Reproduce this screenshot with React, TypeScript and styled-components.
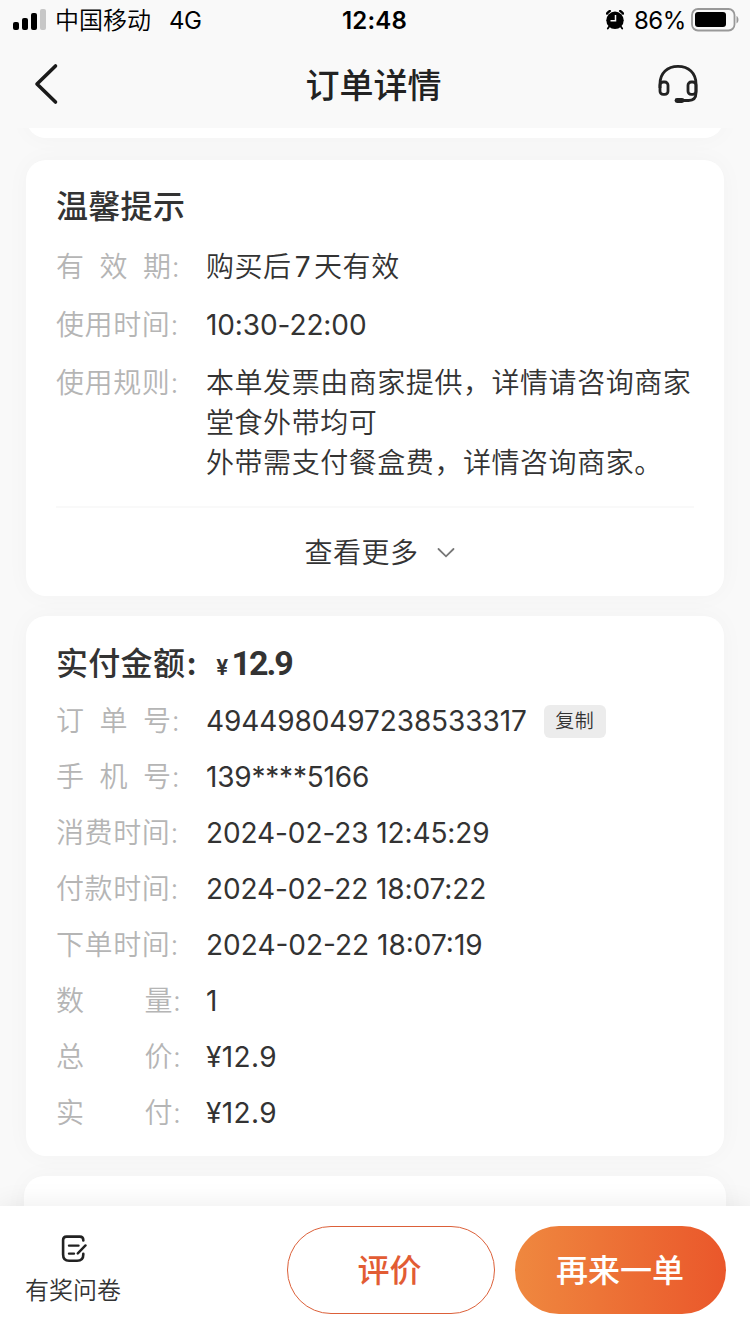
import React from "react";
import styled, { createGlobalStyle } from "styled-components";

const GlobalStyle = createGlobalStyle`
  * { box-sizing: border-box; }
  body {
    margin: 0;
    background: #f9f9f9;
    font-family: Inter, "Noto Sans CJK SC", sans-serif;
    color: #333;
  }
  button { font: inherit; color: inherit; padding: 0; border: 0; background: none; }
`;

const Screen = styled.div`
  width: 750px;
  height: 1334px;
  display: flex;
  flex-direction: column;
  overflow: hidden;
`;

const StatusBar = styled.header`
  height: 40px;
  display: grid;
  grid-template-columns: 1fr auto 1fr;
  align-items: center;
  padding: 0 11px 0 13px;
  background: #f9f9f9;
  color: #000;
  font-size: 24px;
  line-height: 38px;
`;

const StatusGroup = styled.div<{ $end?: boolean }>`
  display: flex;
  align-items: center;
  justify-content: ${(p) => (p.$end ? "flex-end" : "flex-start")};
`;

const Carrier = styled.span`
  margin-left: 9px;
  padding-top: 2px;
  font-weight: 350;
`;

const Network = styled.span`
  margin-left: 18px;
  padding-top: 2px;
  letter-spacing: -0.5px;
`;

const Clock = styled.span`
  padding: 2px 3px 0 0;
  font-weight: 600;
  letter-spacing: 0.2px;
`;

const Percent = styled.span`
  margin: 0 5px 0 10px;
  padding-top: 2px;
  letter-spacing: -0.4px;
`;

const NavBar = styled.nav`
  height: 88px;
  flex: none;
  display: grid;
  grid-template-columns: 64px 1fr 64px;
  align-items: center;
  padding: 0 40px 0 14px;
  background: #f9f9f9;
`;

const NavTitle = styled.h1`
  margin: 0;
  padding: 3px 0 0 23px;
  text-align: center;
  font-size: 34px;
  line-height: 48px;
  font-weight: 500;
  color: #222;
`;

const IconButton = styled.button`
  display: flex;
  justify-content: center;
`;

const Content = styled.main`
  flex: 1;
  min-height: 0;
  overflow: hidden;
  display: flex;
  flex-direction: column;
  gap: 20px;
  padding: 0 26px;
`;

const Card = styled.section<{ $height: number }>`
  flex: none;
  height: ${(p) => p.$height}px;
  padding: 26px 30px 0;
  border-radius: 20px;
  background: #fff;
  box-shadow: 0 0 24px rgba(0, 0, 0, 0.03);
`;

const PreviousCard = styled(Card)`
  margin-top: -30px;
  margin-bottom: 2px;
`;

const NextCard = styled(Card)`
  margin: 0 -2px;
`;

const CardTitle = styled.h2<{ $gap: number }>`
  display: flex;
  align-items: baseline;
  margin: 0 0 ${(p) => p.$gap}px;
  font-size: 32px;
  line-height: 42px;
  font-weight: 500;
  letter-spacing: 0.3px;
`;

const TitleColon = styled.span`
  margin-left: 1px;
  font-weight: 700;
`;

const Currency = styled.span`
  margin-left: 19px;
  font-size: 21px;
  font-weight: 700;
`;

const Amount = styled.span`
  margin-left: 3px;
  font-family: Roboto, sans-serif;
  font-size: 34px;
  font-weight: 700;
  letter-spacing: -2px;
`;

const Rows = styled.dl<{ $gap: number }>`
  margin: 0;
  display: flex;
  flex-direction: column;
  gap: ${(p) => p.$gap}px;
`;

const Row = styled.div`
  display: grid;
  grid-template-columns: 150px 1fr;
  font-size: 28px;
  line-height: 40px;
`;

const Label = styled.dt`
  color: #b5b5b5;
  white-space: pre;
  font-weight: 350;
  letter-spacing: 0.6px;
  word-spacing: -1px;
`;

const TextValue = styled.dd`
  margin: 0;
  white-space: pre;
  font-weight: 350;
  letter-spacing: 0.55px;
`;

const Digit = styled.span`
  margin: 0 3px;
  font-weight: 400;
`;

const NumberValue = styled.dd<{ $spacing?: number }>`
  display: flex;
  align-items: center;
  margin: 0;
  white-space: pre;
  letter-spacing: ${(p) => p.$spacing ?? -0.1}px;
`;

const CopyButton = styled.button`
  width: 62px;
  height: 33px;
  margin-left: 17px;
  border-radius: 6px;
  background: #ececec;
  font-size: 19px;
  font-weight: 350;
  line-height: 33px;
  letter-spacing: 0.4px;
`;

const MoreButton = styled.button`
  width: 100%;
  height: 91px;
  margin-top: 23px;
  padding-left: 9px;
  border-top: 2px solid #f9f9f9;
  display: flex;
  align-items: center;
  justify-content: center;
  gap: 18px;
  font-size: 28px;
  font-weight: 350;
  line-height: 40px;
  letter-spacing: 0.5px;
`;

const ActionBar = styled.footer`
  position: relative;
  flex: none;
  height: 128px;
  display: flex;
  align-items: flex-start;
  padding: 20px 24px 0;
  background: #fff;
  box-shadow: 0 -2px 24px rgba(0, 0, 0, 0.07);
`;

const Survey = styled.button`
  display: flex;
  flex-direction: column;
  align-items: center;
  gap: 11px;
  margin: 9px auto 0 1px;
  font-size: 24px;
  font-weight: 350;
  line-height: 34px;
`;

const PillButton = styled.button<{ $primary?: boolean }>`
  width: ${(p) => (p.$primary ? 211 : 208)}px;
  height: 88px;
  margin-left: ${(p) => (p.$primary ? 20 : 0)}px;
  padding: 0 ${(p) => (p.$primary ? 1 : 3)}px 4px 0;
  border-radius: 44px;
  border: ${(p) => (p.$primary ? "0" : "1px solid #dc6039")};
  background: ${(p) => (p.$primary ? "linear-gradient(90deg, #ef883f, #ea572b)" : "#fff")};
  color: ${(p) => (p.$primary ? "#fff" : "#e25c34")};
  font-size: 32px;
  font-weight: 500;
`;

const SignalIcon = () => (
  <svg width="33" height="22" viewBox="0 0 33 22">
    <rect x="0" y="13" width="6" height="8" rx="2" />
    <rect x="9" y="9" width="6" height="12" rx="2" />
    <rect x="18" y="4" width="6" height="17" rx="2" />
    <rect x="27" y="0" width="6" height="21" rx="2" fill="#c7c7c7" />
  </svg>
);

const AlarmIcon = () => (
  <svg width="18" height="20" viewBox="0 0 18 20" fill="none" stroke="#000">
    <circle cx="9" cy="10.3" r="8.7" fill="#000" stroke="none" />
    <path d="M1 3.600A14 14 0 0 1 3.800 1M14.200 1a14 14 0 0 1 2.800 2.600" strokeWidth="2.400" strokeLinecap="round" />
    <path d="M3.200 16.600 1.800 18.600M14.800 16.600l1.400 2" strokeWidth="1.800" strokeLinecap="round" />
    <path d="M9.500 5v5.800H4.500" stroke="#f9f9f9" strokeWidth="1.500" />
  </svg>
);

const BatteryIcon = () => (
  <svg width="48" height="24" viewBox="0 0 48 24">
    <rect x="1" y="1" width="42.500" height="21.500" rx="6" fill="none" stroke="#999" strokeWidth="1.800" />
    <rect x="4" y="4" width="31" height="15" rx="3" />
    <path d="M45.500 8c2.600 1.200 2.600 6.400 0 7.400z" fill="#999" />
  </svg>
);

const BackIcon = () => (
  <svg width="26" height="42" viewBox="0 0 26 42">
    <path d="M22.500 3 4 21l18.500 18" fill="none" stroke="#1a1a1a" strokeWidth="3.600" strokeLinecap="round" strokeLinejoin="round" />
  </svg>
);

const HeadsetIcon = () => (
  <svg width="40" height="40" viewBox="0 0 40 40" fill="none" stroke="#222" strokeWidth="2.800">
    <path d="M2 24V20C2 9 9.500 2.400 20 2.400S38 9 38 20V29q0 7.500-7.500 7.500H22" />
    <rect x="2" y="18" width="8" height="12.400" rx="3.200" />
    <rect x="30" y="18" width="8" height="12.400" rx="3.200" />
    <path d="M19 36.500h5" strokeWidth="4.800" strokeLinecap="round" />
  </svg>
);

const ChevronIcon = () => (
  <svg width="18" height="12" viewBox="0 0 18 12">
    <path d="m1.500 2 7.500 7.300L16.500 2" fill="none" stroke="#777" strokeWidth="1.800" strokeLinecap="round" />
  </svg>
);

const SurveyIcon = () => (
  <svg width="28" height="28" viewBox="0 0 28 28" fill="none" stroke="#222" strokeWidth="2.600" strokeLinecap="round">
    <g transform="translate(1.500 0)">
      <path d="M22.800 5.500V5q0-3.400-3.400-3.400H6Q2.600 1.600 2.600 5v14.500q0 6.300 6 6.300h8q6.200 0 6.200-6.300v-.8" />
      <path d="M8.500 10.600h9.500M8.500 18.600h5M17.300 18.400 25 10.400" strokeWidth="2.400" />
    </g>
  </svg>
);

const orderRows = [
  { label: "手  机  号:", value: "139****5166", spacing: -0.2 },
  { label: "消费时间:", value: "2024-02-23 12:45:29" },
  { label: "付款时间:", value: "2024-02-22 18:07:22" },
  { label: "下单时间:", value: "2024-02-22 18:07:19", spacing: 0 },
  { label: "数        量:", value: "1" },
  { label: "总        价:", value: "¥12.9", spacing: 0.4 },
  { label: "实        付:", value: "¥12.9", spacing: 0.4 },
];

export default function App() {
  return (
    <Screen>
      <GlobalStyle />
      <StatusBar>
        <StatusGroup>
          <SignalIcon />
          <Carrier>中国移动</Carrier>
          <Network>4G</Network>
        </StatusGroup>
        <Clock>12:48</Clock>
        <StatusGroup $end>
          <AlarmIcon />
          <Percent>86%</Percent>
          <BatteryIcon />
        </StatusGroup>
      </StatusBar>
      <NavBar>
        <IconButton aria-label="返回"><BackIcon /></IconButton>
        <NavTitle>订单详情</NavTitle>
        <IconButton aria-label="客服"><HeadsetIcon /></IconButton>
      </NavBar>
      <Content>
        <PreviousCard $height={40} />
        <Card $height={436}>
          <CardTitle $gap={19}>温馨提示</CardTitle>
          <Rows $gap={18}>
            <Row>
              <Label>有  效  期:</Label>
              <TextValue>购买后<Digit>7</Digit>天有效</TextValue>
            </Row>
            <Row>
              <Label>使用时间:</Label>
              <NumberValue>10:30-22:00</NumberValue>
            </Row>
            <Row>
              <Label>使用规则:</Label>
              <TextValue>{"本单发票由商家提供，详情请咨询商家\n堂食外带均可\n外带需支付餐盒费，详情咨询商家。"}</TextValue>
            </Row>
          </Rows>
          <MoreButton>
            查看更多
            <ChevronIcon />
          </MoreButton>
        </Card>
        <Card $height={540}>
          <CardTitle $gap={12}>
            实付金额<TitleColon>:</TitleColon>
            <Currency>¥</Currency>
            <Amount>12.9</Amount>
          </CardTitle>
          <Rows $gap={16}>
            <Row>
              <Label>订  单  号:</Label>
              <NumberValue>
                4944980497238533317
                <CopyButton>复制</CopyButton>
              </NumberValue>
            </Row>
            {orderRows.map((row) => (
              <Row key={row.label}>
                <Label>{row.label}</Label>
                <NumberValue $spacing={row.spacing}>{row.value}</NumberValue>
              </Row>
            ))}
          </Rows>
        </Card>
        <NextCard $height={120} />
      </Content>
      <ActionBar>
        <Survey>
          <SurveyIcon />
          有奖问卷
        </Survey>
        <PillButton>评价</PillButton>
        <PillButton $primary>再来一单</PillButton>
      </ActionBar>
    </Screen>
  );
}
